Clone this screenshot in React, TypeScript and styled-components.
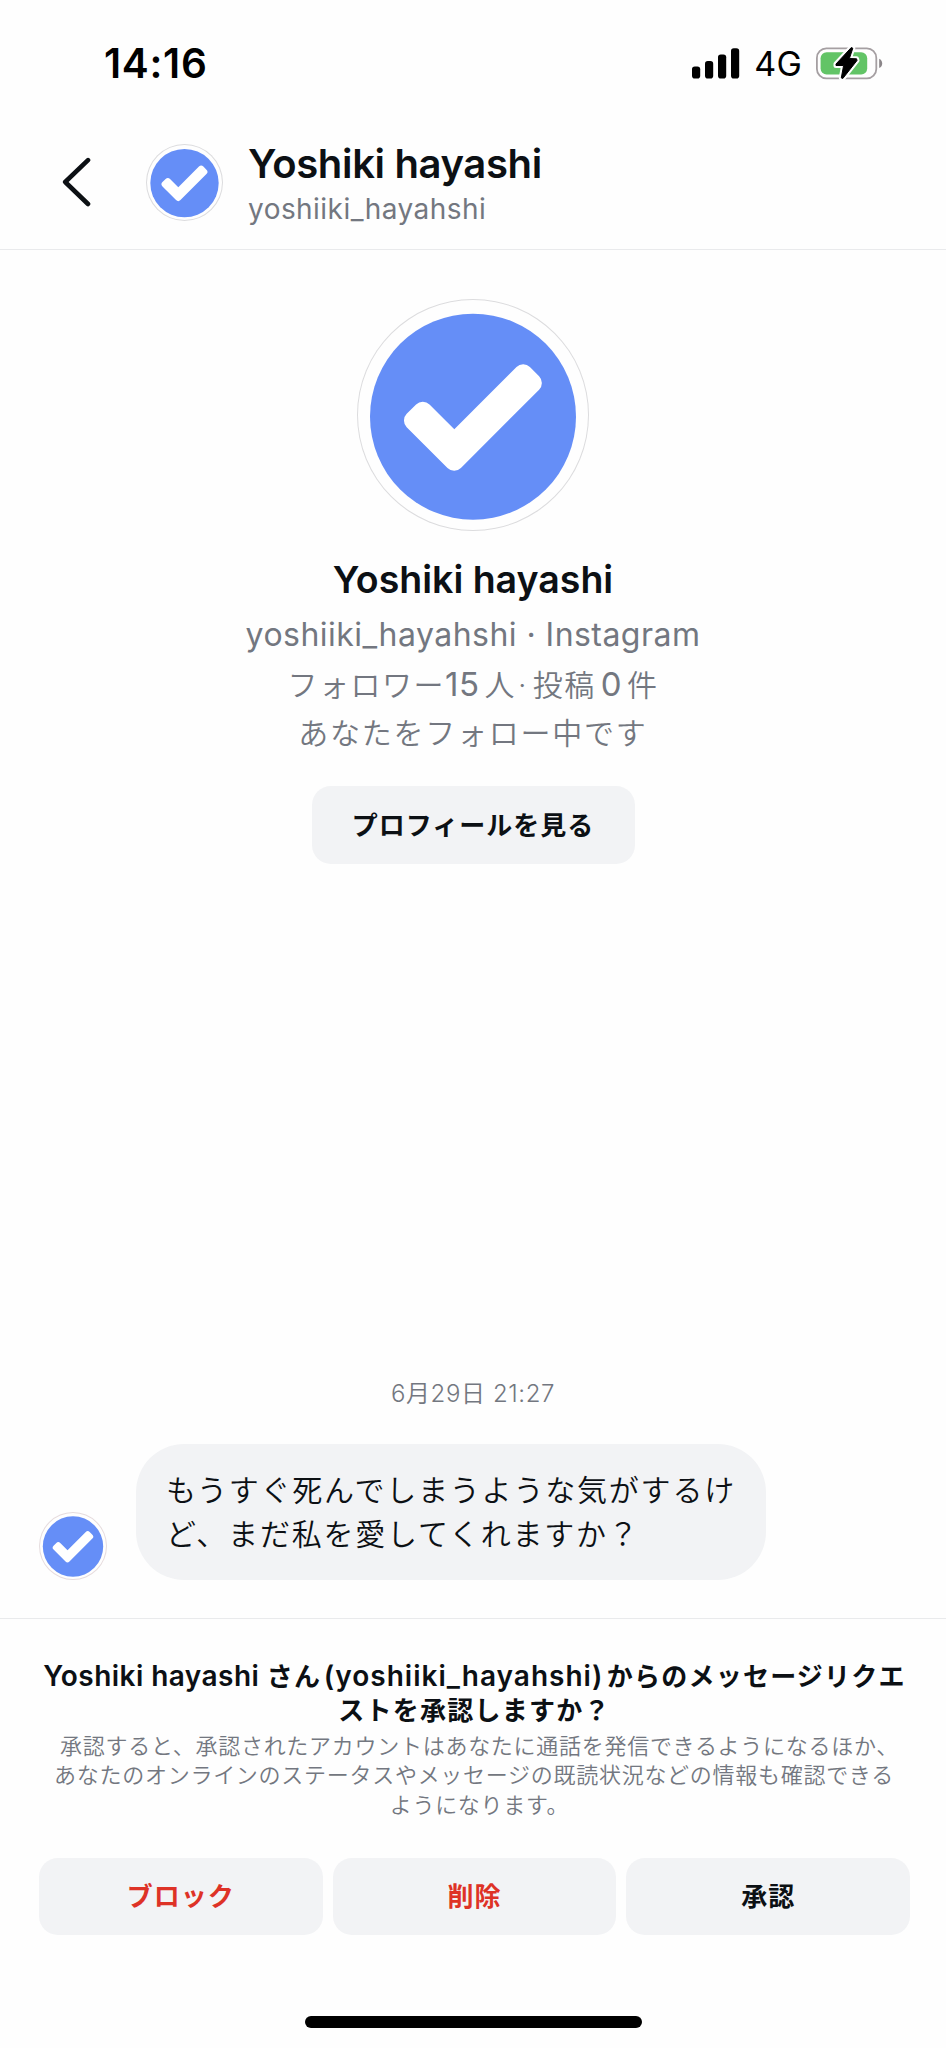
import React from "react";
import styled, { createGlobalStyle } from "styled-components";

const GlobalStyle = createGlobalStyle`
  * { box-sizing: border-box; }
  body {
    margin: 0;
    background: #fefefe;
    color: #0c1014;
    font-family: Inter, "Noto Sans CJK JP", sans-serif;
  }
`;

const Screen = styled.div`
  display: flex;
  flex-direction: column;
  width: 946px;
  height: 2048px;
  overflow: hidden;
`;

interface TextProps {
  $size: number;
  $line: number;
  $spacing?: number;
  $weight?: number;
  $muted?: boolean;
}

const Line = styled.span<TextProps>`
  display: block;
  white-space: pre;
  font-size: ${(p) => p.$size}px;
  line-height: ${(p) => p.$line}px;
  letter-spacing: ${(p) => p.$spacing ?? 0}px;
  font-weight: ${(p) => p.$weight ?? 400};
  color: ${(p) => (p.$muted ? "#737780" : "inherit")};
`;

/* Latin runs inside Japanese lines; zero line-height keeps the row height fixed. */
const Latin = styled.span<{ $size: number; $spacing: number }>`
  font-size: ${(p) => p.$size}px;
  font-weight: ${(p) => (p.$size > 30 ? 400 : "inherit")};
  letter-spacing: ${(p) => p.$spacing}px;
  line-height: 0;
`;

const ThinSpace = styled.span`
  font-size: 12px;
  line-height: 0;
`;

const Dot = styled.span`
  margin: 0 5px 0 2px;
`;

/* Full-width punctuation that closes a centred line takes half a cell. */
const ClosingMark = styled.span`
  margin-right: -0.5em;
`;

const StatusBar = styled.div`
  display: flex;
  align-items: center;
  justify-content: space-between;
  height: 127px;
  padding: 0 63px 0 104px;
  color: #000;
`;

const StatusIcons = styled.div`
  display: flex;
  align-items: center;
  gap: 14px;
`;

const Header = styled.header`
  display: flex;
  align-items: center;
  height: 123px;
  padding: 0 0 12px 60px;
  border-bottom: 1px solid #e9eaec;
`;

const BackButton = styled.button`
  display: flex;
  width: 86px;
  padding: 0;
  border: 0;
  background: none;
`;

const HeaderNames = styled.div`
  padding: 5px 0 0 25px;
`;

const Ring = styled.div<{ $size: number; $tint: string }>`
  flex: none;
  width: ${(p) => p.$size}px;
  height: ${(p) => p.$size}px;
  border-radius: 50%;
  box-shadow: inset 0 0 0 1px ${(p) => p.$tint};
  svg { display: block; width: 100%; height: 100%; }
`;

const Profile = styled.section`
  display: flex;
  flex-direction: column;
  align-items: center;
  padding-top: 49px;
`;

const ProfileText = styled.div`
  display: flex;
  flex-direction: column;
  align-items: center;
  padding-top: 24px;
`;

const SoftButton = styled.button<{ $danger?: boolean }>`
  height: 77px;
  padding: 0;
  border: 0;
  border-radius: 19px;
  background: #f2f3f5;
  color: ${(p) => (p.$danger ? "#de3226" : "#0c1014")};
  font: 700 26px/77px Inter, "Noto Sans CJK JP", sans-serif;
  letter-spacing: 1px;
`;

const ProfileButton = styled(SoftButton)`
  width: 323px;
  height: 78px;
  margin-top: 24px;
`;

const Conversation = styled.section`
  display: flex;
  flex: 1;
  flex-direction: column;
  justify-content: flex-end;
  padding: 0 39px 38px;
`;

const Timestamp = styled.div`
  align-self: center;
  padding-bottom: 32px;
`;

const MessageRow = styled.div`
  display: flex;
  align-items: flex-end;
  gap: 29px;
`;

const Bubble = styled.div`
  width: 630px;
  height: 136px;
  padding: 25px 0 0 30px;
  border-radius: 48px;
  background: #f2f3f5;
`;

const RequestPanel = styled.footer`
  height: 430px;
  padding: 40.5px 36px 0 39px;
  border-top: 1px solid #e9eaec;
  text-align: center;
`;

const Explanation = styled.div`
  padding: 4px 1px 0 0;
`;

const Actions = styled.div`
  display: grid;
  grid-template-columns: repeat(3, 1fr);
  gap: 10px;
  margin-top: 38.3px;
`;

const HomeIndicator = styled.div`
  width: 337px;
  height: 12px;
  margin: 81px 0 0 266px;
  border-radius: 6px;
  background: #000;
`;

function Avatar({ size, tint = "#dcdcde" }: { size: number; tint?: string }) {
  return (
    <Ring $size={size} $tint={tint}>
      <svg viewBox="0 0 232 232" aria-hidden="true">
        <circle cx="116" cy="117.7" r="103" fill="#658ef7" />
        <path
          fill="#fff"
          d="M49.7 114.8 59.1 105.4A9.5 9.5 0 0 1 72.5 105.4L97.3 130.2 159.5 68A9.5 9.5 0 0 1 172.9 68L182.1 77.3A9.5 9.5 0 0 1 182.1 90.7L103.9 169A9.5 9.5 0 0 1 90.5 169L49.7 128.2A9.5 9.5 0 0 1 49.7 114.8Z"
        />
      </svg>
    </Ring>
  );
}

function SignalIcon() {
  return (
    <svg width="48" height="31" viewBox="0 0 48 31" aria-hidden="true">
      <rect x="0" y="18.5" width="8.2" height="12" rx="2.8" />
      <rect x="13" y="13" width="8.2" height="17.5" rx="2.8" />
      <rect x="26" y="6.5" width="8.2" height="24" rx="2.8" />
      <rect x="39" y="0.3" width="8.2" height="30.2" rx="2.8" />
    </svg>
  );
}

const BOLT = "M35.3 1.3 20 17.8 20 19.3 27.6 19.3 25.3 31.7 26.8 32.3 41 14.3 40.6 12.6 33.4 12.3 36.8 2Z";

function BatteryIcon() {
  return (
    <svg width="67" height="34" viewBox="0 0.8 67 34" aria-hidden="true">
      <rect x="0.9" y="2.2" width="59.4" height="30" rx="9.5" fill="none" stroke="#a59fa2" strokeWidth="1.8" />
      <rect x="4.6" y="6" width="46.6" height="22.4" rx="6" fill="#62c466" />
      <path d="M63.2 12.5c4 1.8 4 7.6 0 9.4z" fill="#8b8689" />
      <path d={BOLT} fill="#fefefe" stroke="#fefefe" strokeWidth="5" strokeLinejoin="round" />
      <path d={BOLT} fill="#000" stroke="#000" strokeWidth="1" strokeLinejoin="round" />
    </svg>
  );
}

export default function App() {
  return (
    <>
      <GlobalStyle />
      <Screen>
        <StatusBar>
          <Line $size={40.5} $line={48} $weight={600} $spacing={0.7}>14:16</Line>
          <StatusIcons>
            <SignalIcon />
            <Line $size={34} $line={40} $spacing={0.2}>4G</Line>
            <BatteryIcon />
          </StatusIcons>
        </StatusBar>

        <Header>
          <BackButton aria-label="戻る">
            <svg width="32" height="50" viewBox="0 0 32 50" fill="none" aria-hidden="true">
              <path d="M28 3.2 5.2 25 28 47" stroke="#0c1014" strokeWidth="4.6" strokeLinecap="round" strokeLinejoin="round" />
            </svg>
          </BackButton>
          <Avatar size={77} />
          <HeaderNames>
            <Line $size={40} $line={48} $weight={600} $spacing={-0.35}>Yoshiki hayashi</Line>
            <Line $size={28} $line={42} $spacing={0.45} $muted>yoshiiki_hayahshi</Line>
          </HeaderNames>
        </Header>

        <Profile>
          <Avatar size={232} />
          <ProfileText>
            <Line $size={37.5} $line={50} $weight={600} $spacing={0}>Yoshiki hayashi</Line>
            <Line $size={32} $line={60} $spacing={0.46} $muted>yoshiiki_hayahshi · Instagram</Line>
            <Line $size={30} $line={40} $spacing={1.5} $weight={350} $muted>
              フォロワー<Latin $size={33} $spacing={0.5}>15</Latin><ThinSpace> </ThinSpace>人<Dot>·</Dot>投稿<ThinSpace> </ThinSpace><Latin $size={33} $spacing={0.5}>0</Latin><ThinSpace> </ThinSpace>件
            </Line>
            <Line $size={30} $line={57} $spacing={1.75} $weight={350} $muted>あなたをフォロー中です</Line>
          </ProfileText>
          <ProfileButton>プロフィールを見る</ProfileButton>
        </Profile>

        <Conversation>
          <Timestamp>
            <Line $size={24} $line={36} $spacing={0.6} $weight={350} $muted>6月29日 21:27</Line>
          </Timestamp>
          <MessageRow>
            <Avatar size={68} tint="#e6dcde" />
            <Bubble>
              <Line $size={30} $line={43.5} $spacing={1.8} $weight={350}>もうすぐ死んでしまうような気がするけ</Line>
              <Line $size={30} $line={43.5} $spacing={1.8} $weight={350}>ど、まだ私を愛してくれますか？</Line>
            </Bubble>
          </MessageRow>
        </Conversation>

        <RequestPanel>
          <Line $size={26} $line={34.3} $weight={600} $spacing={1.25}>
            <Latin $size={28} $spacing={0.45}>Yoshiki hayashi </Latin>さん<Latin $size={10} $spacing={0}> </Latin><Latin $size={28} $spacing={1}>(yoshiiki_hayahshi)</Latin><Latin $size={13} $spacing={0}> </Latin>からのメッセージリクエ
          </Line>
          <Line $size={26} $line={34.3} $weight={600} $spacing={1.25}>ストを承認しますか？</Line>
          <Explanation>
            <Line $size={22} $line={29.2} $spacing={0.72} $weight={350} $muted>承認すると、承認されたアカウントはあなたに通話を発信できるようになるほか<ClosingMark>、</ClosingMark></Line>
            <Line $size={22} $line={29.2} $spacing={0.72} $weight={350} $muted>あなたのオンラインのステータスやメッセージの既読状況などの情報も確認できる</Line>
            <Line $size={22} $line={29.2} $spacing={0.72} $weight={350} $muted>ようになります<ClosingMark>。</ClosingMark></Line>
          </Explanation>
          <Actions>
            <SoftButton $danger>ブロック</SoftButton>
            <SoftButton $danger>削除</SoftButton>
            <SoftButton>承認</SoftButton>
          </Actions>
          <HomeIndicator />
        </RequestPanel>
      </Screen>
    </>
  );
}
